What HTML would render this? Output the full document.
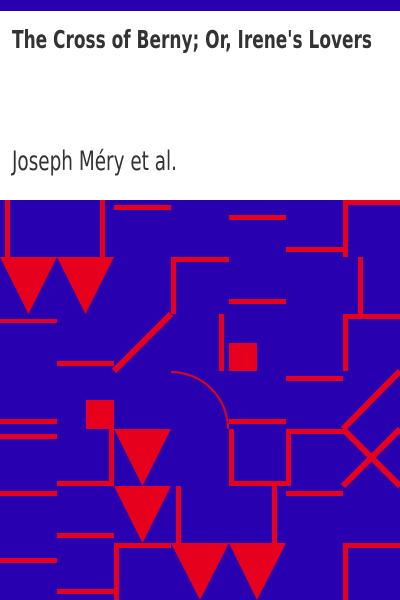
<!DOCTYPE html>
<html><head><meta charset="utf-8"><style>
html,body{margin:0;padding:0;width:400px;height:600px;overflow:hidden;background:#fff}
</style></head><body>
<svg width="400" height="600" viewBox="0 0 400 600" xmlns="http://www.w3.org/2000/svg">
<rect x="0" y="0" width="400" height="11" fill="#2800b0"/>
<rect x="0" y="11" width="400" height="189" fill="#fff"/>
<text x="12" y="48" font-family="'DejaVu Sans Condensed','DejaVu Sans',sans-serif" font-weight="bold" font-size="25" fill="#333" textLength="360" lengthAdjust="spacingAndGlyphs">The Cross of Berny; Or, Irene's Lovers</text>
<text x="12" y="170" font-family="'DejaVu Sans Condensed','DejaVu Sans',sans-serif" font-size="27" fill="#333" textLength="165" lengthAdjust="spacingAndGlyphs">Joseph Méry et al.</text>
<rect x="0" y="200" width="400" height="400" fill="#2800b0"/>
<g fill="#e6001e">
<rect x="5" y="200" width="5" height="57"/>
<rect x="100" y="200" width="5" height="57"/>
<polygon points="0,257 57,257 28.5,314"/>
<polygon points="57,257 114,257 85.5,314"/>
<rect x="114" y="205" width="57" height="5"/>
<rect x="0" y="319" width="57" height="4"/>
<rect x="171" y="257" width="58" height="5"/>
<rect x="171" y="257" width="5" height="57"/>
<rect x="57" y="361" width="57" height="5"/>
<rect x="229" y="215" width="57" height="5"/>
<rect x="343" y="200" width="5" height="57"/>
<rect x="343" y="200" width="57" height="5"/>
<rect x="286" y="247" width="57" height="5"/>
<rect x="358" y="257" width="5" height="57"/>
<rect x="229" y="299" width="57" height="5"/>
<rect x="219" y="314" width="5" height="57"/>
<rect x="229" y="343" width="28" height="28"/>
<rect x="343" y="314" width="57" height="5"/>
<rect x="343" y="314" width="5" height="57"/>
<rect x="286" y="376" width="57" height="5"/>
<rect x="0" y="419" width="57" height="5"/>
<rect x="0" y="434" width="57" height="5"/>
<rect x="86" y="400" width="28" height="29"/>
<rect x="109" y="429" width="5" height="57"/>
<rect x="57" y="481" width="57" height="5"/>
<polygon points="114,429 171,429 142.5,486"/>
<polygon points="114,486 171,486 142.5,543"/>
<rect x="0" y="491" width="57" height="5"/>
<rect x="176" y="486" width="5" height="57"/>
<rect x="57" y="533" width="57" height="5"/>
<rect x="0" y="558" width="57" height="5"/>
<rect x="114" y="543" width="57" height="5"/>
<rect x="114" y="543" width="5" height="57"/>
<rect x="57" y="589" width="57" height="5"/>
<polygon points="171,543 229,543 200,600"/>
<polygon points="229,543 286,543 257,600"/>
<rect x="229" y="419" width="57" height="5"/>
<rect x="229" y="429" width="5" height="57"/>
<rect x="229" y="481" width="62" height="5"/>
<rect x="286" y="429" width="5" height="57"/>
<rect x="286" y="429" width="57" height="5"/>
<rect x="272" y="486" width="5" height="57"/>
<rect x="286" y="491" width="57" height="5"/>
<rect x="343" y="543" width="57" height="5"/>
<rect x="343" y="543" width="5" height="57"/>
</g>
<g stroke="#e6001e" fill="none">
<line x1="171" y1="314" x2="114" y2="371" stroke-width="6"/>
<line x1="400" y1="371" x2="343" y2="429" stroke-width="6"/>
<line x1="343" y1="429" x2="400" y2="486" stroke-width="6"/>
<line x1="343" y1="486" x2="400" y2="429" stroke-width="6"/>
<path d="M171,372 A57,57 0 0 1 228,429" stroke-width="2"/>
</g>
</svg>
</body></html>
